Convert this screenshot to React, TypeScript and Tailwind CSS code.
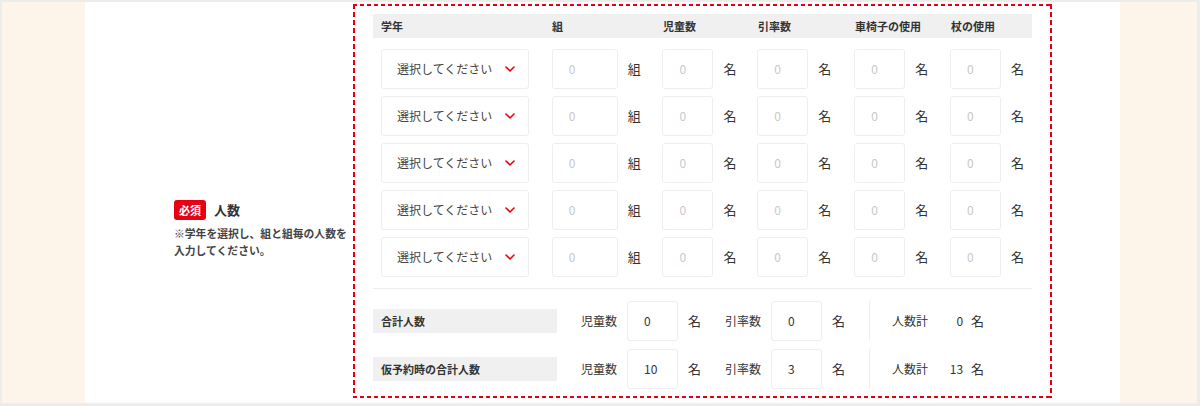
import { ChevronDown } from 'lucide-react';

const font = 'font-["Noto_Sans_CJK_JP","Noto_Sans",sans-serif]';

const rows = [0, 1, 2, 3, 4];

const NumberBox = ({ value, placeholder, wide }: { value?: string; placeholder?: string; wide?: boolean }) => (
  <div
    className={`${wide ? 'w-[66px]' : 'w-[51px]'} h-[40px] flex items-center pl-4 bg-white border border-[#eeeeee] rounded-[3px] text-[12px]`}
  >
    {value !== undefined ? (
      <span className="text-[#333333]">{value}</span>
    ) : (
      <span className="text-[#c8c8c8]">{placeholder}</span>
    )}
  </div>
);

const Unit = ({ children }: { children: React.ReactNode }) => (
  <span className="ml-[10px] text-[13px] text-[#333333]">{children}</span>
);

const SummaryRow = ({ label, kids, staff, total }: { label: string; kids: string; staff: string; total: string }) => (
  <div className="flex items-center h-[40px]">
    <div className="w-[184px] h-[24px] bg-[#f0f0f0] flex items-center pl-2 text-[11px] font-bold text-[#333333]">
      {label}
    </div>
    <span className="ml-6 text-[12px] text-[#333333]">児童数</span>
    <div className="ml-[10px]">
      <NumberBox value={kids} />
    </div>
    <Unit>名</Unit>
    <span className="ml-6 text-[12px] text-[#333333]">引率数</span>
    <div className="ml-[10px]">
      <NumberBox value={staff} />
    </div>
    <Unit>名</Unit>
    <div className="ml-6 w-px h-[40px] bg-[#eeeeee]" />
    <span className="ml-[22px] text-[12px] text-[#333333]">人数計</span>
    <span className="w-[35px] text-right text-[12px] text-[#333333]">{total}</span>
    <span className="ml-2 text-[13px] text-[#333333]">名</span>
  </div>
);

export default function App() {
  return (
    <div className={`${font} w-[1200px] h-[406px] bg-[#ececec] pl-[2px] pr-[3px] pt-[2px] pb-[3px]`}>
      <div className="flex h-full">
        <div className="w-[83px] bg-[#fdf5e9]" />
        <div className="w-[1035px] bg-white flex">
          {/* label column */}
          <div className="w-[268px] pl-[89px] pt-[198px]">
            <div className="flex items-center">
              <span className="bg-[#e60012] text-white text-[11px] font-bold rounded-[3px] px-[5px] h-[20px] flex items-center">
                必須
              </span>
              <span className="ml-2 text-[13px] font-bold text-[#333333]">人数</span>
            </div>
            <p className="mt-[5px] text-[10.8px] font-bold leading-[17px] text-[#444444] whitespace-nowrap">
              ※学年を選択し、組と組毎の人数を
              <br />
              入力してください。
            </p>
          </div>

          {/* dashed form box */}
          <div className="mt-[2px] w-[699px] h-[394px] bg-no-repeat [background-image:repeating-linear-gradient(90deg,#e60012_0_4px,transparent_4px_7px),repeating-linear-gradient(90deg,#e60012_0_4px,transparent_4px_7px),repeating-linear-gradient(180deg,#e60012_0_5px,transparent_5px_8px),repeating-linear-gradient(180deg,#e60012_0_5px,transparent_5px_8px)] [background-position:left_top,left_bottom,left_top,right_top] [background-size:100%_2px,100%_2px,2px_100%,2px_100%] pl-[20px] pr-[20px] pt-[10px]">
            <div className="h-[24px] bg-[#f0f0f0] flex items-center pl-2 text-[11px] font-bold text-[#333333]">
              <span className="w-[171px]">学年</span>
              <span className="w-[111px]">組</span>
              <span className="w-[95px]">児童数</span>
              <span className="w-[97px]">引率数</span>
              <span className="w-[96px]">車椅子の使用</span>
              <span>杖の使用</span>
            </div>

            <div className="mt-[11px] flex flex-col gap-[7px] px-2">
              {rows.map((r) => (
                <div key={r} className="flex items-center h-[40px]">
                  <div className="w-[171px]">
                    <div className="w-[148px] h-[40px] border border-[#eeeeee] rounded-[3px] flex items-center pl-[15px] text-[12px] text-[#444444]">
                      選択してください
                      <ChevronDown className="ml-[10px] w-[16px] h-[16px] text-[#e60012]" strokeWidth={2.4} />
                    </div>
                  </div>
                  <div className="w-[111px] flex items-center">
                    <NumberBox placeholder="0" wide />
                    <Unit>組</Unit>
                  </div>
                  <div className="w-[95px] flex items-center">
                    <NumberBox placeholder="0" />
                    <Unit>名</Unit>
                  </div>
                  <div className="w-[97px] flex items-center">
                    <NumberBox placeholder="0" />
                    <Unit>名</Unit>
                  </div>
                  <div className="w-[96px] flex items-center">
                    <NumberBox placeholder="0" />
                    <Unit>名</Unit>
                  </div>
                  <div className="flex items-center">
                    <NumberBox placeholder="0" />
                    <Unit>名</Unit>
                  </div>
                </div>
              ))}
            </div>

            <div className="mt-[11px] h-px bg-[#eeeeee]" />

            <div className="mt-[12px] flex flex-col gap-[8px]">
              <SummaryRow label="合計人数" kids="0" staff="0" total="0" />
              <SummaryRow label="仮予約時の合計人数" kids="10" staff="3" total="13" />
            </div>
          </div>
        </div>
        <div className="w-[77px] bg-[#fdf5e9]" />
      </div>
    </div>
  );
}
